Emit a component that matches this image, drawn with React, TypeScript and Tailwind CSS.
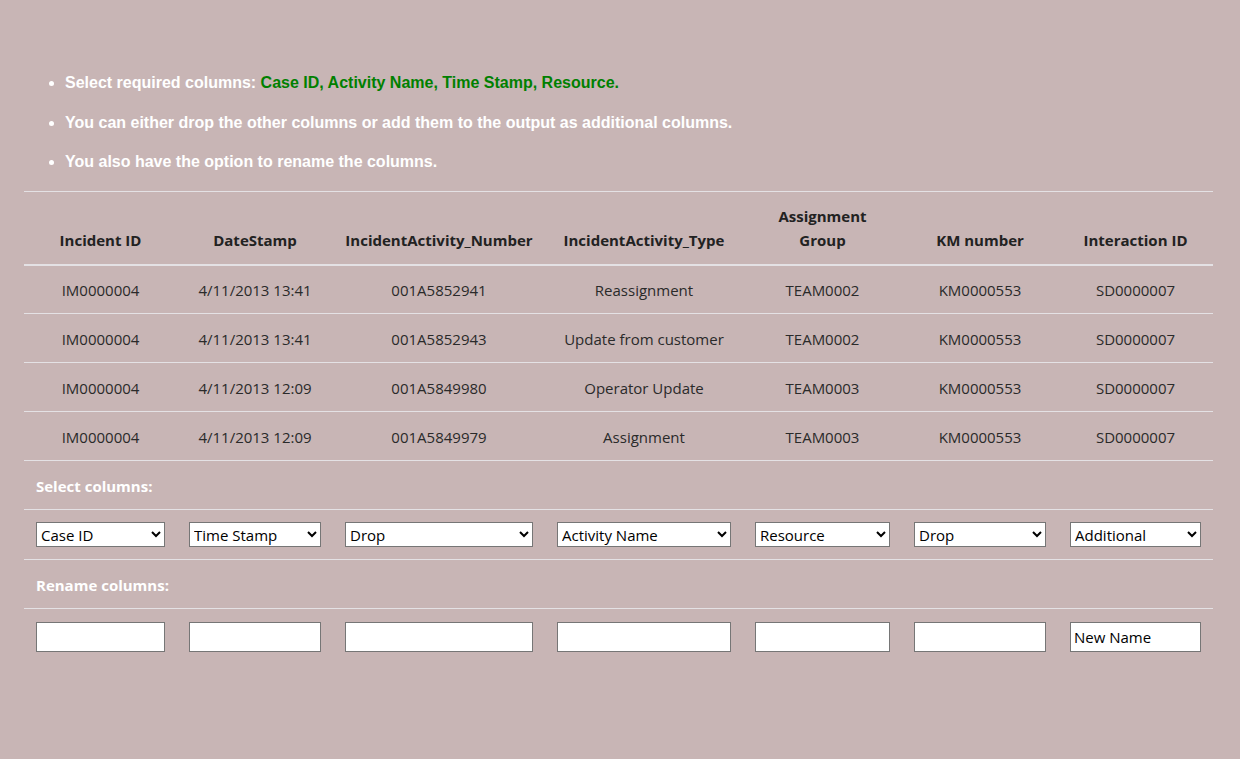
const headers = [
  ["Incident ID"],
  ["DateStamp"],
  ["IncidentActivity_Number"],
  ["IncidentActivity_Type"],
  ["Assignment", "Group"],
  ["KM number"],
  ["Interaction ID"],
];

const rows = [
  ["IM0000004", "4/11/2013 13:41", "001A5852941", "Reassignment", "TEAM0002", "KM0000553", "SD0000007"],
  ["IM0000004", "4/11/2013 13:41", "001A5852943", "Update from customer", "TEAM0002", "KM0000553", "SD0000007"],
  ["IM0000004", "4/11/2013 12:09", "001A5849980", "Operator Update", "TEAM0003", "KM0000553", "SD0000007"],
  ["IM0000004", "4/11/2013 12:09", "001A5849979", "Assignment", "TEAM0003", "KM0000553", "SD0000007"],
];

const widths = [153, 156, 212, 198, 159, 156, 155];
const picks = ["Case ID", "Time Stamp", "Drop", "Activity Name", "Resource", "Drop", "Additional"];
const options = ["Case ID", "Activity Name", "Time Stamp", "Resource", "Drop", "Additional"];

export default function App() {
  return (
    <main className="min-h-[759px] w-full bg-[#c8b5b5] px-6 pt-[71px] font-['Open_Sans',sans-serif]">
      <ul className="list-disc pl-[41px] font-['Liberation_Sans',Arial,sans-serif] text-[16px] font-bold text-white">
        <li className="h-[40px] leading-[24px]">
          Select required columns: <span className="text-[#008000]">Case ID, Activity Name, Time Stamp, Resource.</span>
        </li>
        <li className="h-[40px] leading-[24px]">
          You can either drop the other columns or add them to the output as additional columns.
        </li>
        <li className="h-[40px] leading-[22px]">You also have the option to rename the columns.</li>
      </ul>

      <table className="w-[1189px] table-fixed border-collapse text-[15px] text-[#2a2a2a]">
        <colgroup>
          {widths.map((w, i) => (
            <col key={i} style={{ width: w }} />
          ))}
        </colgroup>
        <thead>
          <tr className="border-t border-b-2 border-t-[#e4e1e4] border-b-[#e4e1e4]">
            {headers.map((h, i) => (
              <th key={i} className="h-[73px] px-3 pb-[12px] align-bottom text-center font-bold leading-[24px] text-[#222]">
                {h.map((line) => (
                  <div key={line}>{line}</div>
                ))}
              </th>
            ))}
          </tr>
        </thead>
        <tbody>
          {rows.map((r, ri) => (
            <tr key={ri} className="h-[49px] border-b border-[#e4e1e4]">
              {r.map((c, ci) => (
                <td key={ci} className="px-3 pt-[2px] text-center">
                  {c}
                </td>
              ))}
            </tr>
          ))}
          <tr className="h-[49px] border-b border-[#e4e1e4]">
            <td colSpan={7} className="px-3 pt-[2px] text-[15px] font-bold text-white">
              Select columns:
            </td>
          </tr>
          <tr className="h-[50px] border-b border-[#e4e1e4]">
            {picks.map((p, i) => (
              <td key={i} className="px-3">
                <select
                  defaultValue={p}
                  className="block h-[25px] w-full border border-[#767676] bg-white pl-0 font-['Open_Sans',sans-serif] text-[15px] text-black"
                >
                  {options.map((o) => (
                    <option key={o}>{o}</option>
                  ))}
                </select>
              </td>
            ))}
          </tr>
          <tr className="h-[49px] border-b border-[#e4e1e4]">
            <td colSpan={7} className="px-3 pt-[2px] text-[15px] font-bold text-white">
              Rename columns:
            </td>
          </tr>
          <tr className="h-[56px]">
            {picks.map((_, i) => (
              <td key={i} className="px-3 pb-[13px] pt-[13px]">
                <input
                  type="text"
                  defaultValue={i === 6 ? "New Name" : ""}
                  className="block h-[30px] w-full border border-[#767676] bg-white px-[3px] font-['Open_Sans',sans-serif] text-[15px] text-black"
                />
              </td>
            ))}
          </tr>
        </tbody>
      </table>
    </main>
  );
}
